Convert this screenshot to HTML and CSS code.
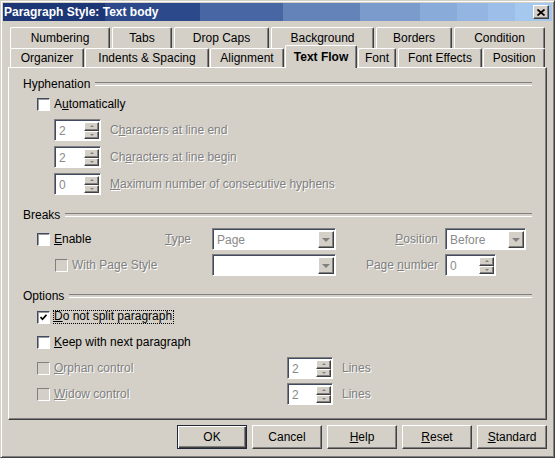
FILE: index.html
```html
<!DOCTYPE html>
<html lang="en">
<head>
<meta charset="utf-8">
<title>Paragraph Style: Text body</title>
<link rel="stylesheet" href="styles.css">
</head>
<body>
<div class="window">
  <div class="titlebar">
    <span class="title">Paragraph Style: Text body</span>
    <span class="close"><svg width="8" height="7" viewBox="0 0 8 7"><path d="M0.5 0.5 L7.5 6.5 M7.5 0.5 L0.5 6.5" stroke="#000" stroke-width="1.7" fill="none"/></svg></span>
  </div>
  <div class="tabs">
    <div class="tabrow row1">
      <div class="tab t-numbering">Numbering</div>
      <div class="tab t-tabs">Tabs</div>
      <div class="tab t-dropcaps">Drop Caps</div>
      <div class="tab t-background">Background</div>
      <div class="tab t-borders">Borders</div>
      <div class="tab t-condition">Condition</div>
    </div>
    <div class="tabrow row2">
      <div class="tab t-organizer">Organizer</div>
      <div class="tab t-indents">Indents &amp; Spacing</div>
      <div class="tab t-alignment">Alignment</div>
      <div class="tab t-textflow sel">Text Flow</div>
      <div class="tab t-font">Font</div>
      <div class="tab t-effects">Font Effects</div>
      <div class="tab t-position">Position</div>
    </div>
  </div>
  <div class="panel">
    <div class="sec-head hyph">Hyphenation</div>
    <div class="check-row auto"><span class="cb"></span><span>A<u>u</u>tomatically</span></div>
    <div class="spin-row first">
      <span class="spin"><span class="field">2</span><span class="spin-btns"><span class="sbtn up"></span><span class="sbtn down"></span></span></span>
      <span class="dis spin-label">C<u>h</u>aracters at line end</span>
    </div>
    <div class="spin-row">
      <span class="spin"><span class="field">2</span><span class="spin-btns"><span class="sbtn up"></span><span class="sbtn down"></span></span></span>
      <span class="dis spin-label">Ch<u>a</u>racters at line begin</span>
    </div>
    <div class="spin-row">
      <span class="spin"><span class="field">0</span><span class="spin-btns"><span class="sbtn up"></span><span class="sbtn down"></span></span></span>
      <span class="dis spin-label"><u>M</u>aximum number of consecutive hyphens</span>
    </div>

    <div class="sec-head brk">Breaks</div>
    <div class="breaks">
      <div class="cell check-cell"><span class="cb"></span><span><u>E</u>nable</span></div>
      <div class="cell dis"><span><u>T</u>ype</span></div>
      <div class="cell"><span class="combo w-type"><span class="field">Page</span><span class="combo-btn"></span></span></div>
      <div class="cell right dis"><span><u>P</u>osition</span></div>
      <div class="cell"><span class="combo w-pos"><span class="field">Before</span><span class="combo-btn"></span></span></div>

      <div class="cell check-cell sub"><span class="cb dis-box"></span><span class="dis">With Page Style</span></div>
      <div class="cell"></div>
      <div class="cell"><span class="combo w-type"><span class="field"></span><span class="combo-btn"></span></span></div>
      <div class="cell right dis"><span>Page <u>n</u>umber</span></div>
      <div class="cell"><span class="spin w-pagenum"><span class="field">0</span><span class="spin-btns"><span class="sbtn up"></span><span class="sbtn down"></span></span></span></div>
    </div>

    <div class="sec-head opts">Options</div>
    <div class="opt-row first">
      <span class="cb"><svg width="7" height="7" viewBox="0 0 7 7"><path d="M0.5 3 L2.5 5.2 L6.5 0.8" stroke="#000" stroke-width="1.7" fill="none"/></svg></span>
      <span class="focus"><u>D</u>o not split paragraph</span>
    </div>
    <div class="opt-row">
      <span class="cb"></span><span><u>K</u>eep with next paragraph</span>
    </div>
    <div class="opt-row spinned">
      <div class="opt-check"><span class="cb dis-box"></span><span class="dis"><u>O</u>rphan control</span></div>
      <span class="spin w-lines"><span class="field">2</span><span class="spin-btns"><span class="sbtn up"></span><span class="sbtn down"></span></span></span>
      <span class="dis lines">Lines</span>
    </div>
    <div class="opt-row spinned">
      <div class="opt-check"><span class="cb dis-box"></span><span class="dis"><u>W</u>idow control</span></div>
      <span class="spin w-lines"><span class="field">2</span><span class="spin-btns"><span class="sbtn up"></span><span class="sbtn down"></span></span></span>
      <span class="dis lines">Lines</span>
    </div>
  </div>
  <div class="buttons">
    <button class="btn default">OK</button>
    <button class="btn">Cancel</button>
    <button class="btn"><span><u>H</u>elp</span></button>
    <button class="btn"><span><u>R</u>eset</span></button>
    <button class="btn"><span><u>S</u>tandard</span></button>
  </div>
</div>
</body>
</html>
```

FILE: styles.css
```css
* { box-sizing: border-box; }
html, body { margin: 0; padding: 0; }
body {
  width: 555px;
  height: 458px;
  overflow: hidden;
  background: #d4d0c8;
  font-family: "Liberation Sans", Arial, sans-serif;
  font-size: 12px;
  color: #000;
}
u { text-decoration: underline; text-underline-offset: 1px; }

.window {
  width: 555px;
  height: 458px;
  display: flex;
  flex-direction: column;
  border: 1px solid;
  border-color: #d4d0c8 #404040 #404040 #d4d0c8;
  box-shadow: inset 1px 1px #fff, inset -1px -1px #808080;
  padding: 2px;
}

.titlebar {
  flex: none;
  height: 18px;
  display: flex;
  align-items: center;
  justify-content: space-between;
  padding-left: 1px;
  background: linear-gradient(to right,
    #1d3675 0 102px, #2c4a8b 102px 197px, #4866a3 197px 280px,
    #6483b9 280px 357px, #7b9bcc 357px 417px, #89abd9 417px 454px,
    #94b5e2 454px 485px, #9cbee8 485px 512px, #a5c8ef 512px);
}
.title { color: #fff; font-weight: bold; font-size: 12px; line-height: 18px; }
.close {
  width: 16px;
  height: 14px;
  margin-right: 3px;
  display: flex;
  align-items: center;
  justify-content: center;
  background: #d4d0c8;
  border: 1px solid;
  border-color: #fff #404040 #404040 #fff;
  box-shadow: inset -1px -1px #808080;
}
.close svg { display: block; }

/* tabs */
.tabs { flex: none; margin-top: 6px; padding-left: 7px; }
.tabrow { display: flex; align-items: flex-start; }
.row1 { height: 21px; }
.row2 { height: 19px; }
.tab {
  flex: none;
  height: 100%;
  display: flex;
  align-items: center;
  justify-content: center;
  white-space: nowrap;
  background: #d4d0c8;
  border-top: 1px solid #fff;
  border-left: 1px solid #fff;
  border-right: 1px solid #404040;
  box-shadow: inset -1px 0 #808080;
  border-radius: 2px 2px 0 0;
}
.tab.sel {
  height: 23px;
  margin-top: -3px;
  position: relative;
  z-index: 2;
  font-weight: bold;
}
.t-numbering { width: 100px; }
.t-tabs { width: 60px; margin-left: 2px; }
.t-dropcaps { width: 95px; margin-left: 2px; }
.t-background { width: 103px; margin-left: 2px; }
.t-borders { width: 76px; margin-left: 2px; }
.t-condition { width: 91px; margin-left: 2px; }
.t-organizer { width: 74px; }
.t-indents { width: 124px; margin-left: 1px; }
.t-alignment { width: 74px; margin-left: 1px; }
.t-textflow { width: 72px; margin-left: 1px; }
.t-font { width: 38px; margin-left: 1px; }
.t-effects { width: 84px; margin-left: 2px; }
.t-position { width: 62px; margin-left: 1px; }

/* panel */
.panel {
  flex: none;
  height: 353px;
  margin: 0 5px;
  border: 1px solid;
  border-color: #fff #404040 #404040 #fff;
  box-shadow: inset -1px -1px #808080;
  padding: 0 14px;
  display: flex;
  flex-direction: column;
}
.sec-head {
  flex: none;
  height: 14px;
  display: flex;
  align-items: center;
  white-space: nowrap;
}
.sec-head::after {
  content: "";
  flex: 1;
  height: 2px;
  margin-left: 5px;
  border-top: 1px solid #808080;
  border-bottom: 1px solid #fff;
}
.hyph { margin-top: 9px; }
.brk { margin-top: 13px; }
.opts { margin-top: 13px; }

.dis { color: #808080; text-shadow: 1px 1px 0 #fff; }

.cb {
  flex: none;
  width: 13px;
  height: 13px;
  margin-right: 4px;
  background: #fff;
  border: 1px solid;
  border-color: #404a60 #fff #fff #404a60;
  box-shadow: inset 1px 1px #9a9a9a;
  display: flex;
  align-items: center;
  justify-content: center;
}
.cb svg { display: block; }
.cb.dis-box {
  background: #d4d0c8;
  border-color: #808080 #fff #fff #808080;
  box-shadow: none;
}

.check-row {
  flex: none;
  height: 22px;
  display: flex;
  align-items: center;
  padding-left: 14px;
}
.auto { margin-top: 2px; }

.spin-row {
  flex: none;
  height: 22px;
  display: flex;
  align-items: center;
  padding-left: 31px;
  margin-top: 5px;
}
.spin-row.first { margin-top: 4px; }
.spin-label { margin-left: 9px; }

/* sunken field frame */
.spin, .combo {
  flex: none;
  display: flex;
  height: 22px;
  border: 1px solid;
  border-color: #808080 #fff #fff #808080;
  box-shadow: inset 1px 1px #404a60;
  padding: 1px;
  background: #fff;
}
.spin { width: 47px; }
.field {
  flex: 1;
  min-width: 0;
  margin: 1px 0 0 1px;
  padding-left: 2px;
  color: #8a8a8a;
  line-height: 18px;
  background: #fff;
  white-space: nowrap;
}
.spin-btns {
  flex: none;
  width: 15px;
  display: flex;
  flex-direction: column;
  margin-top: 1px;
}
.sbtn {
  flex: 1;
  background: #d4d0c8;
  border: 1px solid;
  border-color: #fff #404040 #404040 #fff;
  box-shadow: inset -1px -1px #808080;
  display: flex;
  align-items: center;
  justify-content: center;
}
.sbtn::before {
  content: "";
  width: 0;
  height: 0;
  border-left: 2px solid transparent;
  border-right: 2px solid transparent;
}
.sbtn.up::before { border-bottom: 2px solid #808080; }
.sbtn.down::before { border-top: 2px solid #808080; }

.combo.w-type { width: 124px; }
.combo.w-pos { width: 81px; }
.combo-btn {
  flex: none;
  width: 16px;
  margin-top: 1px;
  background: #d4d0c8;
  border: 1px solid;
  border-color: #fff #404040 #404040 #fff;
  box-shadow: inset -1px -1px #808080;
  display: flex;
  align-items: center;
  justify-content: center;
}
.combo-btn::before {
  content: "";
  width: 0;
  height: 0;
  border-left: 4px solid transparent;
  border-right: 4px solid transparent;
  border-top: 4px solid #808080;
}
.spin.w-pagenum { width: 51px; }
.spin.w-lines { width: 46px; }

/* breaks grid */
.breaks {
  flex: none;
  display: grid;
  grid-template-columns: 128px 47px 124px 1fr 87px;
  grid-template-rows: 22px 22px;
  row-gap: 4px;
  margin-top: 6px;
  padding-left: 14px;
}
.cell { display: flex; align-items: center; white-space: nowrap; }
.cell.right { justify-content: flex-end; padding-right: 7px; }
.check-cell.sub { padding-left: 18px; }

/* options */
.opt-row {
  flex: none;
  height: 22px;
  display: flex;
  align-items: center;
  padding-left: 14px;
  margin-top: 3px;
}
.opt-row.spinned { margin-top: 4px; }
.opt-check { width: 250px; display: flex; align-items: center; }
.lines { margin-left: 9px; }
.focus {
  border: 1px dotted #000;
  margin-left: -1px;
  line-height: 11px;
  height: 14px;
  padding: 0 1px 0 0;
}

/* buttons */
.buttons {
  flex: none;
  display: flex;
  justify-content: flex-end;
  gap: 5px;
  margin-top: 5px;
  padding-right: 5px;
}
.btn {
  width: 70px;
  height: 24px;
  padding: 0;
  margin: 0;
  font-family: inherit;
  font-size: 12px;
  color: #000;
  background: #d4d0c8;
  border: 1px solid;
  border-color: #fff #404040 #404040 #fff;
  box-shadow: inset -1px -1px #808080;
  border-radius: 0;
}
.btn.default {
  border-color: #202838;
  box-shadow: inset 1px 1px #fff, inset -1px -1px #404040, inset -2px -2px #808080;
}
```
